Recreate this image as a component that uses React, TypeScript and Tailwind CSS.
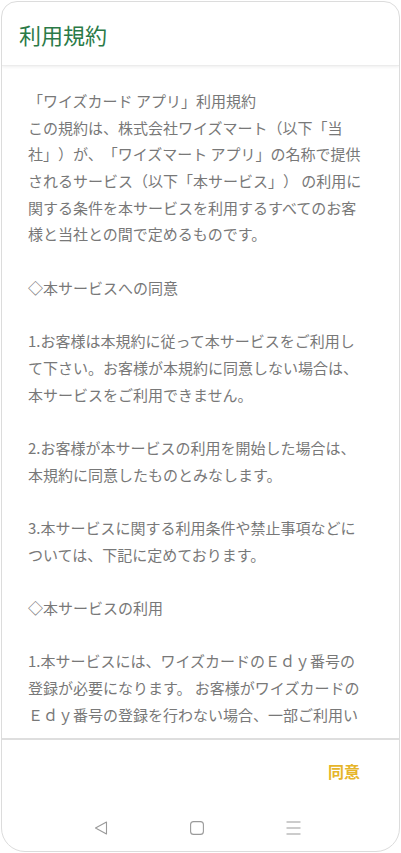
import React from "react";

const lines: string[] = [
  "「ワイズカード アプリ」利用規約",
  "この規約は、株式会社ワイズマート（以下「当",
  "社」）が、「ワイズマート アプリ」の名称で提供",
  "されるサービス（以下「本サービス」） の利用に",
  "関する条件を本サービスを利用するすべてのお客",
  "様と当社との間で定めるものです。",
  "",
  "◇本サービスへの同意",
  "",
  "1.お客様は本規約に従って本サービスをご利用し",
  "て下さい。お客様が本規約に同意しない場合は、",
  "本サービスをご利用できません。",
  "",
  "2.お客様が本サービスの利用を開始した場合は、",
  "本規約に同意したものとみなします。",
  "",
  "3.本サービスに関する利用条件や禁止事項などに",
  "ついては、下記に定めております。",
  "",
  "◇本サービスの利用",
  "",
  "1.本サービスには、ワイズカードのＥｄｙ番号の",
  "登録が必要になります。 お客様がワイズカードの",
  "Ｅｄｙ番号の登録を行わない場合、一部ご利用い",
];

export default function App() {
  return (
    <div
      className="w-[401px] h-[853px] bg-white p-[1px]"
      style={{ fontFamily: '"Noto Sans CJK JP", "Noto Sans", sans-serif' }}
    >
      <div className="w-full h-full border border-[#dcdcdc] rounded-t-[16px] rounded-b-[24px] overflow-hidden flex flex-col bg-white">
        <div className="h-[64px] shrink-0 flex items-center pl-[17px] border-b border-[#ececec] shadow-[0_1px_3px_rgba(0,0,0,0.07)] relative z-10">
          <span className="text-[22px] leading-none text-[#2b7a47]">利用規約</span>
        </div>
        <div className="h-[672px] shrink-0 overflow-hidden pt-[22px] pl-[26px] text-[15px] text-[#787878] [text-spacing-trim:space-all]">
          {lines.map((l, i) => (
            <div key={i} className="h-[26.7px] leading-[26.7px] whitespace-pre">
              {l}
            </div>
          ))}
        </div>
        <div className="h-[62px] shrink-0 border-t-2 border-[#dedede] flex items-center justify-end pr-[39px]">
          <span className="text-[16px] font-bold text-[#e6b52a] leading-none mt-[2px]">同意</span>
        </div>
        <div className="flex-1 flex items-center justify-center gap-[82px] pt-[4px] pr-[6px]">
          <svg width="14" height="14" viewBox="0 0 14 14">
            <path d="M12.5 1 L1.5 7 L12.5 13 Z" fill="none" stroke="#9a9a9a" strokeWidth="1.1" strokeLinejoin="round" />
          </svg>
          <svg width="14" height="14" viewBox="0 0 14 14">
            <rect x="0.6" y="0.6" width="12.8" height="12.8" rx="3" fill="none" stroke="#9a9a9a" strokeWidth="1.1" />
          </svg>
          <svg width="15" height="14" viewBox="0 0 15 14">
            <path d="M0.5 1 H14.5 M0.5 7 H14.5 M0.5 13 H14.5" stroke="#9a9a9a" strokeWidth="1.1" />
          </svg>
        </div>
      </div>
    </div>
  );
}
